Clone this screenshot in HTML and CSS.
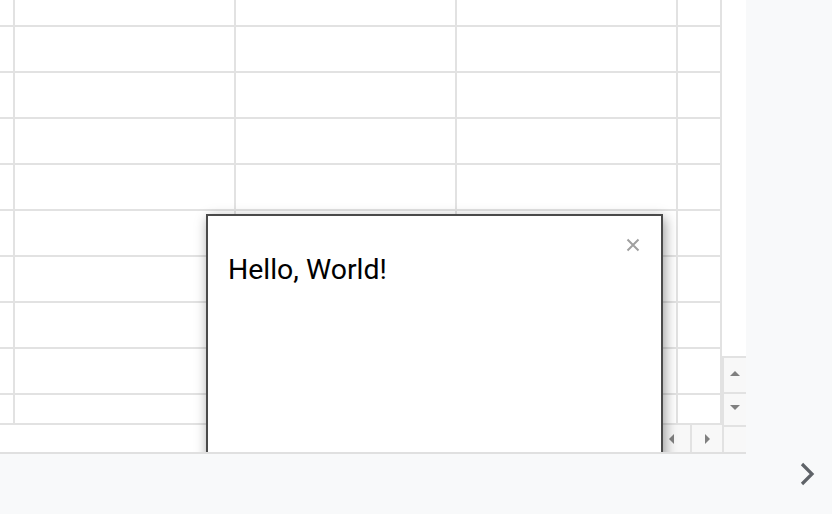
FILE: index.html
```html
<!DOCTYPE html>
<html>
<head>
<meta charset="utf-8">
<link rel="stylesheet" href="styles.css">
</head>
<body>
<div class="top">
  <div class="main">
    <div class="sheet">
      <div class="cells">
        <div></div><div></div><div></div><div></div><div></div>
        <div></div><div></div><div></div><div></div><div></div>
        <div></div><div></div><div></div><div></div><div></div>
        <div></div><div></div><div></div><div></div><div></div>
        <div></div><div></div><div></div><div></div><div></div>
        <div></div><div></div><div></div><div></div><div></div>
        <div></div><div></div><div></div><div></div><div></div>
        <div></div><div></div><div></div><div></div><div></div>
        <div></div><div></div><div></div><div></div><div></div>
        <div></div><div></div><div></div><div></div><div></div>
      </div>
      <div class="vscroll">
        <div class="vspace"></div>
        <div class="vbtn up"><span class="tri tri-up"></span></div>
        <div class="vbtn down"><span class="tri tri-down"></span></div>
      </div>
      <div class="hscroll">
        <div class="hspace"></div>
        <div class="hbtn left"><span class="tri tri-left"></span></div>
        <div class="hbtn right"><span class="tri tri-right"></span></div>
      </div>
      <div class="corner"></div>
    </div>
    <div class="dialog">
      <button class="close" aria-label="Close">
        <svg width="14" height="14" viewBox="0 0 14 14"><path d="M1.5 1.5 L12.5 12.5 M12.5 1.5 L1.5 12.5" stroke="#a0a0a0" stroke-width="2" fill="none"/></svg>
      </button>
      <p class="msg">Hello, World!</p>
    </div>
  </div>
  <div class="side"></div>
</div>
<div class="bottom">
  <svg class="chev" width="18" height="24" viewBox="0 0 18 24"><path d="M3 2 L13 12 L3 22" stroke="#5f6368" stroke-width="3.2" fill="none"/></svg>
</div>
</body>
</html>
```
FILE: styles.css
```css
html, body {
  margin: 0;
  padding: 0;
  width: 832px;
  height: 514px;
  overflow: hidden;
  font-family: Roboto, "Liberation Sans", sans-serif;
  background: #f8f9fa;
}
.top {
  display: flex;
  height: 454px;
}
.main {
  position: relative;
  width: 746px;
  height: 452px;
  border-bottom: 2px solid #e0e0e0;
  overflow: hidden;
  background: #fff;
}
.side {
  flex: 1;
  background: #f8f9fa;
}
.sheet {
  display: grid;
  grid-template-columns: 722px 24px;
  grid-template-rows: 425px 27px;
}
.cells {
  display: grid;
  grid-template-columns: 13px 219px 219px 219px 42px;
  grid-template-rows: 25px repeat(8, 44px) 28px;
  gap: 2px;
  padding: 0 2px 2px 0;
  background: #e2e2e2;
}
.cells > div {
  background: #fff;
}
.vscroll {
  display: flex;
  flex-direction: column;
}
.vspace {
  flex: 1;
  background: #fff;
}
.vbtn {
  height: 34px;
  background: #f8f8f8;
  border-left: 2px solid #e2e2e2;
  border-top: 2px solid #e2e2e2;
  display: flex;
  align-items: center;
  justify-content: center;
  box-sizing: border-box;
}
.vbtn.up {
  height: 36px;
  padding-bottom: 3px;
}
.vbtn.down {
  height: 33px;
  padding-bottom: 5px;
}
.hscroll {
  display: flex;
}
.hspace {
  flex: 1;
  background: #fff;
}
.hbtn {
  width: 30px;
  background: #f8f8f8;
  border-left: 2px solid #e2e2e2;
  display: flex;
  align-items: center;
  justify-content: center;
  box-sizing: border-box;
}
.hbtn.left {
  width: 34px;
  padding-right: 6px;
}
.hbtn.right {
  width: 32px;
}
.corner {
  background: #f8f8f8;
  border-left: 2px solid #e2e2e2;
  border-top: 2px solid #e2e2e2;
}
.tri {
  width: 0;
  height: 0;
  border-style: solid;
  border-color: transparent;
}
.tri-up {
  border-width: 0 5px 5px 5px;
  border-bottom-color: #808080;
}
.tri-down {
  border-width: 5px 5px 0 5px;
  border-top-color: #808080;
}
.tri-left {
  border-width: 5px 5px 5px 0;
  border-right-color: #808080;
}
.tri-right {
  border-width: 5px 0 5px 5px;
  border-left-color: #808080;
}
.dialog {
  position: absolute;
  left: 206px;
  top: 214px;
  width: 453px;
  height: 320px;
  background: #fff;
  border: 2px solid #4a4a4a;
  box-shadow: 2px 4px 12px rgba(0, 0, 0, 0.4);
}
.close {
  position: absolute;
  top: 22px;
  right: 21px;
  width: 14px;
  height: 14px;
  padding: 0;
  border: 0;
  background: none;
  display: flex;
}
.msg {
  margin: 0;
  padding: 36px 0 0 20px;
  font-size: 28.4px;
  line-height: 36px;
  color: #000;
}
.bottom {
  height: 60px;
  display: flex;
  justify-content: flex-end;
  align-items: flex-start;
  padding-right: 15px;
  box-sizing: border-box;
}
.chev {
  margin-top: 8px;
}
```
